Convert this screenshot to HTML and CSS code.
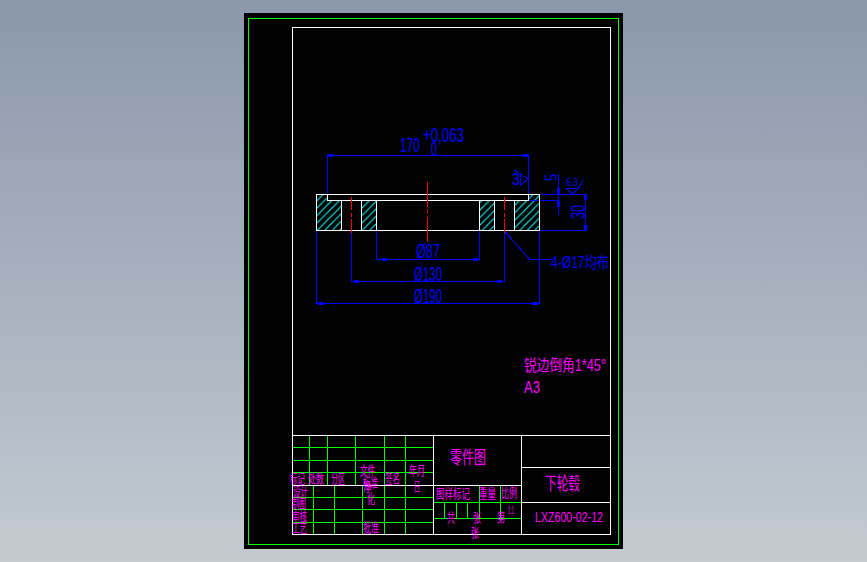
FILE: index.html
```html
<!DOCTYPE html>
<html lang="zh">
<head>
<meta charset="utf-8">
<title>零件图</title>
<link rel="stylesheet" href="styles.css">
</head>
<body>
<main class="sheet">
<svg class="drawing" viewBox="244 13 379 536" width="379" height="536" xmlns="http://www.w3.org/2000/svg">
  <defs>
    <pattern id="hatch" width="7.5" height="7.5" patternUnits="userSpaceOnUse" x="316" y="194">
      <path class="hatch-line" d="M-1 8.5 L8.5 -1 M-1 1 L1 -1 M6.5 8.5 L8.5 6.5"/>
    </pattern>
  </defs>

  <!-- sheet frames -->
  <rect class="ln green" x="248.5" y="18.5" width="370" height="526"/>
  <rect class="ln white" x="292.5" y="27.5" width="318" height="507"/>

  <!-- section hatching -->
  <path class="hatched" d="M317 195 H327 V201 H341 V230 H317 Z"/>
  <path class="hatched" d="M362 201 H376 V230 H362 Z"/>
  <path class="hatched" d="M480 201 H494 V230 H480 Z"/>
  <path class="hatched" d="M515 201 H529 V195 H539 V230 H515 Z"/>

  <!-- blue dimensions -->
  <path class="ln blue" d="M327.5 155.5 H528.5 M327.5 155.5 V194 M528.5 155.5 V194"/>
  <path class="ln blue" d="M376.5 231 V259.5 H479.5 V231"/>
  <path class="ln blue" d="M351.5 233 V281.5 H504.5 V233"/>
  <path class="ln blue" d="M316.5 231 V303.5 H539.5 V231"/>
  <path class="ln blue" d="M540 194.5 H586.5 M540 230.5 H586.5 M585.5 194.5 V230.5"/>
  <path class="ln blue" d="M529 200.5 H558.5 M558.5 174 V215"/>
  <path class="ln blue" d="M505 232 L530 259.5 H552"/>
  <path class="ln blue" d="M514 170 L528 179 L520 185.5 M520 173 V185"/>
  <path class="ln blue" d="M566.5 188.5 H578.5 M566.5 188.5 L572.5 194 L578.5 188.5 L583 180.5"/>
  <path class="arrow" d="M327 154 h6 v3 h-6z M523 154 h6 v3 h-6z M382 258 h5 v3 h-5z M473 258 h5 v3 h-5z M354 280 h5 v3 h-5z M497 280 h5 v3 h-5z M318 302 h6 v3 h-6z M532 302 h6 v3 h-6z M584 195 h3 v5 h-3z M584 225 h3 v5 h-3z M557 188 h3 v6 h-3z M557 201 h3 v6 h-3z M505 232 l3 1 l-2 2z"/>

  <!-- part outline -->
  <path class="ln white" d="M316.5 194.5 H539.5 V230.5 H316.5 Z M327.5 194.5 V200.5 H528.5 V194.5 M341.5 200.5 V230.5 M361.5 200.5 V230.5 M376.5 200.5 V230.5 M479.5 200.5 V230.5 M494.5 200.5 V230.5 M514.5 200.5 V230.5"/>

  <!-- centre lines -->
  <path class="ln red" d="M351.5 197 V210 M351.5 213 V217 M351.5 219 V233 M504.5 197 V210 M504.5 213 V217 M504.5 219 V233 M427.5 182 V207 M427.5 209 V213 M427.5 217 V242"/>

  <!-- title block -->
  <path class="ln green" d="M293 447.5 H433 M293 460.5 H433 M293 472.5 H433 M293 497.5 H433 M293 509.5 H433 M293 522.5 H433 M309.5 436 V485 M327.5 436 V485 M355.5 436 V485 M384.5 436 V534 M405.5 436 V534 M313.5 485 V534 M334.5 485 V534 M362.5 485 V534"/>
  <path class="ln green" d="M434 502.5 H521 M434 518.5 H521 M479.5 486 V518 M500.5 486 V518 M444.5 503 V518 M456.5 503 V518 M467.5 503 V518"/>
  <path class="ln white" d="M292.5 435.5 H610.5 M292.5 485.5 H521 M433.5 435.5 V534 M521.5 435.5 V534 M521.5 467.5 H610.5 M521.5 502.5 H610.5"/>

  <!-- blue text -->
  <text class="t blue-t num" x="400" y="152" textLength="20" lengthAdjust="spacingAndGlyphs">170</text>
  <text class="t blue-t num" x="423" y="142" textLength="41" lengthAdjust="spacingAndGlyphs">+0,063</text>
  <text class="t blue-t num" x="431" y="156" textLength="6" lengthAdjust="spacingAndGlyphs">0</text>
  <text class="t blue-t small" x="512" y="185" textLength="8" lengthAdjust="spacingAndGlyphs">3</text>
  <text class="t blue-t small" transform="translate(557 181) rotate(-90)" textLength="7" lengthAdjust="spacingAndGlyphs">5</text>
  <text class="t blue-t num" transform="translate(585 219) rotate(-90)" textLength="14" lengthAdjust="spacingAndGlyphs">30</text>
  <text class="t blue-t tiny" x="566" y="186" textLength="12" lengthAdjust="spacingAndGlyphs">6.3</text>
  <text class="t blue-t num" x="416" y="258" textLength="24" lengthAdjust="spacingAndGlyphs">Ø87</text>
  <text class="t blue-t num" x="414" y="281" textLength="28" lengthAdjust="spacingAndGlyphs">Ø130</text>
  <text class="t blue-t num" x="414" y="303" textLength="28" lengthAdjust="spacingAndGlyphs">Ø190</text>
  <text class="t blue-t small" x="551" y="268" textLength="58" lengthAdjust="spacingAndGlyphs">4-Ø17均布</text>

  <!-- magenta text -->
  <text class="t mag note" x="524" y="371" textLength="82" lengthAdjust="spacingAndGlyphs">锐边倒角1*45°</text>
  <text class="t mag note" x="524" y="393" textLength="16" lengthAdjust="spacingAndGlyphs">A3</text>
  <text class="t mag big" x="450" y="464" textLength="36" lengthAdjust="spacingAndGlyphs">零件图</text>
  <text class="t mag big" x="545" y="490" textLength="35" lengthAdjust="spacingAndGlyphs">下轮毂</text>
  <text class="t mag code" x="535" y="522" textLength="68" lengthAdjust="spacingAndGlyphs">LXZ600-02-12</text>

  <text class="t mag cell" x="290" y="483" textLength="15" lengthAdjust="spacingAndGlyphs">标记</text>
  <text class="t mag cell" x="308" y="483" textLength="16" lengthAdjust="spacingAndGlyphs">处数</text>
  <text class="t mag cell" x="331" y="483" textLength="14" lengthAdjust="spacingAndGlyphs">分区</text>
  <text class="t mag cell" x="360" y="475" textLength="15" lengthAdjust="spacingAndGlyphs">文件</text>
  <text class="t mag cell" x="363" y="487" textLength="15" lengthAdjust="spacingAndGlyphs">标准</text>
  <text class="t mag cell" x="363" y="491" textLength="9" lengthAdjust="spacingAndGlyphs">净</text>
  <text class="t mag cell" x="367" y="503" textLength="8" lengthAdjust="spacingAndGlyphs">化</text>
  <text class="t mag cell" x="385" y="483" textLength="15" lengthAdjust="spacingAndGlyphs">签名</text>
  <text class="t mag cell" x="409" y="475" textLength="16" lengthAdjust="spacingAndGlyphs">年月</text>
  <text class="t mag cell" x="414" y="491" textLength="6" lengthAdjust="spacingAndGlyphs">日</text>
  <text class="t mag cell" x="293" y="496" textLength="15" lengthAdjust="spacingAndGlyphs">设计</text>
  <text class="t mag cell" x="292" y="508" textLength="14" lengthAdjust="spacingAndGlyphs">制图</text>
  <text class="t mag cell" x="292" y="521" textLength="15" lengthAdjust="spacingAndGlyphs">审核</text>
  <text class="t mag cell" x="292" y="532" textLength="15" lengthAdjust="spacingAndGlyphs">工艺</text>
  <text class="t mag cell" x="363" y="532" textLength="16" lengthAdjust="spacingAndGlyphs">批准</text>
  <text class="t mag cell" x="436" y="498" textLength="34" lengthAdjust="spacingAndGlyphs">图样标记</text>
  <text class="t mag cell" x="479" y="498" textLength="17" lengthAdjust="spacingAndGlyphs">重量</text>
  <text class="t mag cell" x="501" y="497" textLength="16" lengthAdjust="spacingAndGlyphs">比例</text>
  <text class="t mag cell" x="447" y="522" textLength="8" lengthAdjust="spacingAndGlyphs">共</text>
  <text class="t mag cell" x="473" y="522" textLength="8" lengthAdjust="spacingAndGlyphs">张</text>
  <text class="t mag cell" x="497" y="522" textLength="8" lengthAdjust="spacingAndGlyphs">第</text>
  <text class="t mag cell" x="471" y="537" textLength="8" lengthAdjust="spacingAndGlyphs">张</text>
  <text class="t mag tiny" x="508" y="514" textLength="6" lengthAdjust="spacingAndGlyphs">1:1</text>
</svg>
</main>
</body>
</html>
```
FILE: styles.css
```css
html, body {
  margin: 0;
  height: 100%;
  overflow: hidden;
}

body {
  display: flex;
  justify-content: center;
  align-items: flex-start;
  padding-top: 13px;
  box-sizing: border-box;
  background: linear-gradient(180deg, #8b98ab 0%, #a6b1bf 50%, #c4cbd0 100%);
}

.sheet {
  width: 379px;
  height: 536px;
  background: #000;
}

.drawing {
  display: block;
}

.ln {
  fill: none;
  stroke-width: 1;
  shape-rendering: crispEdges;
}

.green { stroke: #00ff00; }
.white { stroke: #ffffff; }
.blue  { stroke: #0000ff; }
.red   { stroke: #ff0000; }

.arrow {
  fill: #0000ff;
}

.hatched {
  fill: url(#hatch);
}

.hatch-line {
  fill: none;
  stroke: #00ffff;
  stroke-width: 1;
}

.t {
  font-family: "Liberation Sans", "Noto Sans CJK SC", sans-serif;
  font-weight: 400;
}

.blue-t { fill: #0000ff; }
.mag    { fill: #ff00ff; }

.num   { font-size: 20px; }
.small { font-size: 16px; }
.tiny  { font-size: 10px; }
.note  { font-size: 16px; }
.code  { font-size: 14px; }
.big   { font-size: 18px; }
.cell  { font-size: 13px; }
```
